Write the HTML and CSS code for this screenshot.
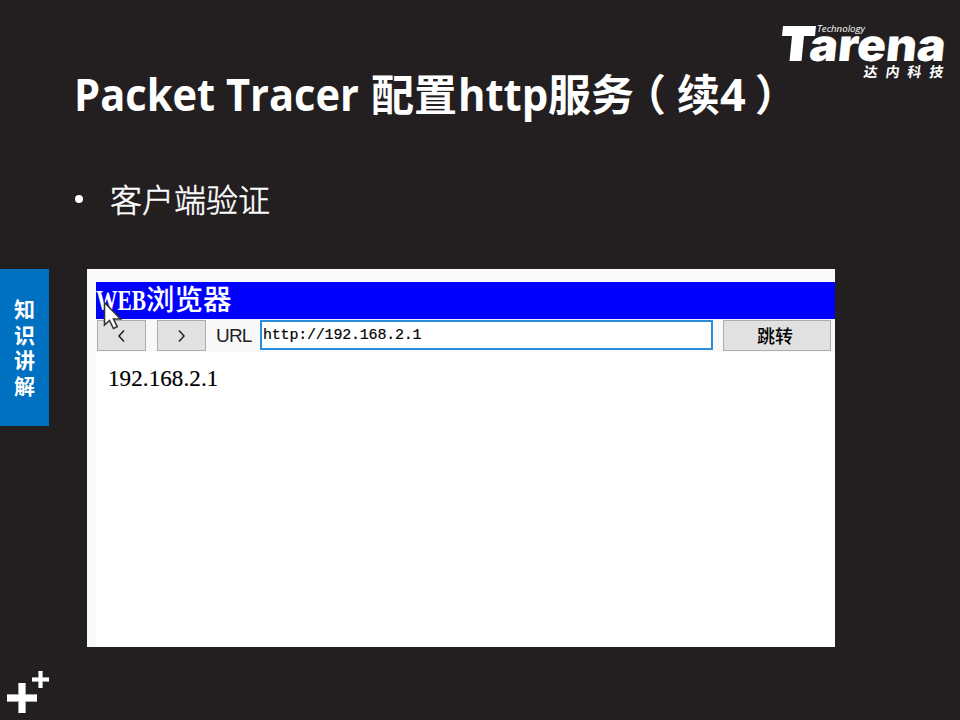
FILE: index.html
```
<!DOCTYPE html>
<html lang="zh-CN">
<head>
<meta charset="utf-8">
<title>Packet Tracer 配置http服务（续4）</title>
<link rel="stylesheet" href="styles.css">
</head>
<body>
<main class="slide">
  <header class="header">
    <h1 class="title"><span class="name">Packet Tracer</span><span class="han">配置</span><span class="http">http</span><span class="han">服务</span><span class="han open">（</span><span class="han">续</span><span class="four">4</span><span class="han close">）</span></h1>
    <svg class="logo" viewBox="0 0 180 70" width="180" height="70">
      <g fill="#fff">
        <path d="M3 6H36L35 16H24L21.500 41H9.500L12 16H2Z"/>
        <text class="brand" x="28" y="41" textLength="136" lengthAdjust="spacingAndGlyphs" transform="translate(4.500 0) skewX(-6)">arena</text>
        <text class="tech" x="37" y="12" textLength="48" lengthAdjust="spacingAndGlyphs">Technology</text>
        <text class="brand-han" x="83" y="57.500" transform="translate(8 0) skewX(-8)">达内科技</text>
      </g>
    </svg>
  </header>
  <ul class="points"><li><span class="dot"></span>客户端验证</li></ul>
  <section class="content">
    <aside class="tab">知识讲解</aside>
    <div class="shot">
      <div class="browser">
        <div class="bar"><span class="web">WEB</span>浏览器</div>
        <div class="tools">
          <span class="btn nav"><svg width="10" height="14" viewBox="0 0 10 14"><path d="M7 1.500 2 7l5 5.500"/></svg></span>
          <span class="btn nav"><svg width="10" height="14" viewBox="0 0 10 14"><path d="M2 1.500 7 7 2 12.500"/></svg></span>
          <span class="label">URL</span>
          <span class="url">http://192.168.2.1</span>
          <span class="btn go">跳转</span>
        </div>
        <div class="page">192.168.2.1</div>
      </div>
      <svg class="cursor" width="20" height="30" viewBox="0 0 20 30"><path d="M1.500 1.500V24l5-4.500 4 8 3.700-1.800-3.700-7.700H17.500Z"/></svg>
    </div>
  </section>
  <footer class="footer">
    <svg width="60" height="60" viewBox="0 0 60 60"><path fill="#aaa" d="M18 23h8v11h11v8H26v11h-8V42H7v-8h11zM38 11h5v6h6v5h-6v6h-5v-6h-6v-5h6z"/><path fill="#fff" d="M19 23h6v12h12v6H25v12h-6V41H7v-6h12zM39 11h3v7h7v3h-7v7h-3v-7h-7v-3h7z"/></svg>
  </footer>
</main>
</body>
</html>
```
FILE: styles.css
```
* { box-sizing: border-box; }
body { margin: 0; background: #231f20; }
.slide {
  width: 960px;
  height: 720px;
  display: grid;
  grid-template-rows: 160px 109px 378px 73px;
  overflow: hidden;
  color: #fff;
  font-family: "Open Sans", "Noto Sans CJK SC", sans-serif;
}
.header { display: flex; justify-content: space-between; padding: 20px 0 0 74px; }
.title {
  display: flex;
  width: 706px;
  margin: 42px 0 0;
  height: 60px;
  font-size: 45px;
  line-height: 60px;
  font-weight: 700;
  white-space: nowrap;
  align-items: baseline;
}
.name { width: 297px; transform: scaleX(0.925); transform-origin: left; }
.han { font-family: "Noto Sans CJK SC", sans-serif; font-size: 43px; }
.http { width: 91px; padding-left: 1px; transform: scaleX(0.93); transform-origin: left; }
.four { width: 26px; }
.open { margin: 0 11px 0 -11px; }
.close { margin-left: 9px; }
.logo { flex: none; width: 180px; height: 70px; }
.brand { font: 900 45px "Inter", "Open Sans", sans-serif; }
.tech { font: italic 9.500px "Open Sans", sans-serif; }
.brand-han { font: 700 14px "Noto Sans CJK SC", sans-serif; letter-spacing: 8px; }
.points {
  margin: 0;
  padding: 14px 0 0 74px;
  list-style: none;
  font: 300 32px/48px "Noto Sans CJK SC", sans-serif;
  -webkit-text-stroke: 0.5px #fff;
}
.points li { display: flex; align-items: center; }
.dot { width: 8px; height: 8px; margin: 2px 27px 0 1px; border-radius: 50%; background: #fff; }
.content { display: flex; align-items: flex-start; }
.tab {
  width: 49px;
  height: 157px;
  margin-right: 38px;
  padding: 27px 14px 0;
  background: #0070c0;
  font: 700 21px/25.500px "Noto Sans CJK SC", sans-serif;
  word-break: break-all;
}
.shot { position: relative; width: 748px; height: 378px; padding: 13px 0 0 9px; background: #f9f9f9; }
.browser { height: 365px; background: #fff; color: #000; }
.bar {
  display: flex;
  height: 37px;
  background: #00f;
  color: #fff;
  font: 500 28.500px/37px "Liberation Serif", "Noto Sans CJK SC", serif;
}
.web { width: 50px; font-weight: 700; transform: scaleX(0.75); transform-origin: left; }
.tools { display: flex; height: 33px; padding: 1px 0 0 1px; background: #f8f8f8; align-items: flex-start; }
.btn { display: flex; height: 31px; align-items: center; justify-content: center; background: #e1e1e1; border: 1px solid #adadad; }
.nav { width: 49px; margin-right: 11px; }
.nav path { fill: none; stroke: #222; stroke-width: 1.500px; }
.label { width: 44px; margin-left: -1px; font: 19px/32px "Liberation Sans", sans-serif; letter-spacing: -0.8px; color: #222; }
.url { width: 453px; height: 30px; margin-right: 10px; padding-left: 1px; border: 2px solid #2a8ddc; background: #fff; font: 15px/28px "Liberation Mono", monospace; letter-spacing: -0.2px; -webkit-text-stroke: 0.2px #000; }
.go { width: 108px; padding: 0 4px 2px 0; font: 500 18px/28px "Noto Sans CJK SC", sans-serif; }
.page { padding: 12px 0 0 12px; font: 23px/30px "Liberation Serif", serif; letter-spacing: 0.1px; -webkit-text-stroke: 0.2px #000; }
.cursor { position: absolute; left: 16px; top: 32px; }
.cursor path { fill: #fff; stroke: #333; stroke-width: 1.600px; }
.footer { padding-top: 13px; height: 73px; }
.footer svg { display: block; }
```
